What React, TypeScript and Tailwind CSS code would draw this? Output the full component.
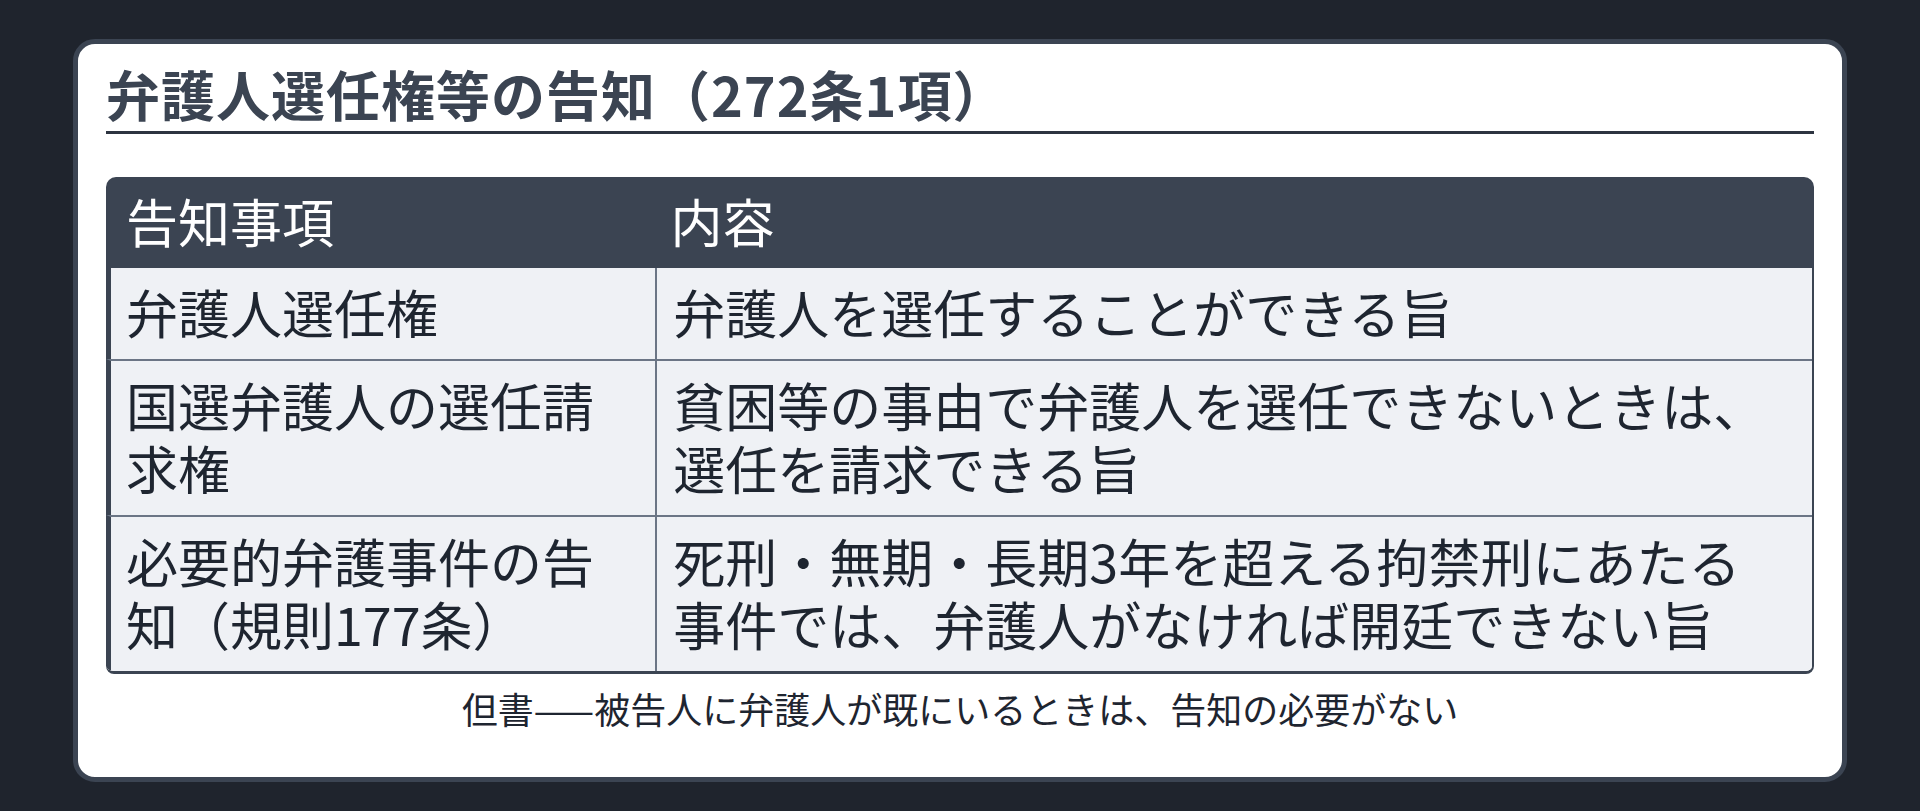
import React from 'react';

const rows = [
  { item: '弁護人選任権', content: '弁護人を選任することができる旨' },
  { item: '国選弁護人の選任請求権', content: '貧困等の事由で弁護人を選任できないときは、選任を請求できる旨' },
  { item: '必要的弁護事件の告知（規則177条）', content: '死刑・無期・長期3年を超える拘禁刑にあたる事件では、弁護人がなければ開廷できない旨' },
];

const App = () => {
  return (
    <div
      className="h-[811px] w-full bg-[#1f242d] pt-[39px] px-[73px] pb-[29px]"
      style={{ fontFamily: '"Noto Sans CJK JP", "Noto Sans", sans-serif' }}
    >
      <div className="h-full bg-white border-[5px] border-[#3b4452] rounded-[22px] pt-[18px] px-[28px]">
        {/* Title */}
        <h1 className="text-[54px] leading-[64px] font-bold tracking-[1px] text-[#3b4452] border-b-[3px] border-[#2d3440] pb-[5px]">
          弁護人選任権等の告知（272条1項）
        </h1>

        {/* Table */}
        <div className="mt-[43px] text-[52px] leading-[63px] text-[#1e2530]">
          <div className="grid grid-cols-[32%_1fr] bg-[#3b4452] text-white rounded-t-[10px] h-[91px]">
            <div className="px-5 pt-[12px]">告知事項</div>
            <div className="px-[18px] pt-[12px]">内容</div>
          </div>
          <div className="border-r-2 border-b-[3px] border-[#3b4452] rounded-b-[8px] overflow-hidden">
            {rows.map((row, i) => (
              <div
                key={i}
                className={`grid grid-cols-[32%_1fr] bg-[#eff1f5] border-l-[5px] border-l-[#3b4452] ${i > 0 ? 'border-t-2 border-t-[#6b7585]' : ''}`}
              >
                <div className="pl-[15px] pr-4 pt-[12px] pb-[16px]">{row.item}</div>
                <div className="border-l-2 border-[#6b7585] pl-4 pr-6 pt-[12px] pb-[16px]">{row.content}</div>
              </div>
            ))}
          </div>
        </div>

        {/* Note */}
        <p className="mt-[12px] text-center text-[36px] leading-[44px] text-[#1e2530]">
          但書——被告人に弁護人が既にいるときは、告知の必要がない
        </p>
      </div>
    </div>
  );
};

export default App;
